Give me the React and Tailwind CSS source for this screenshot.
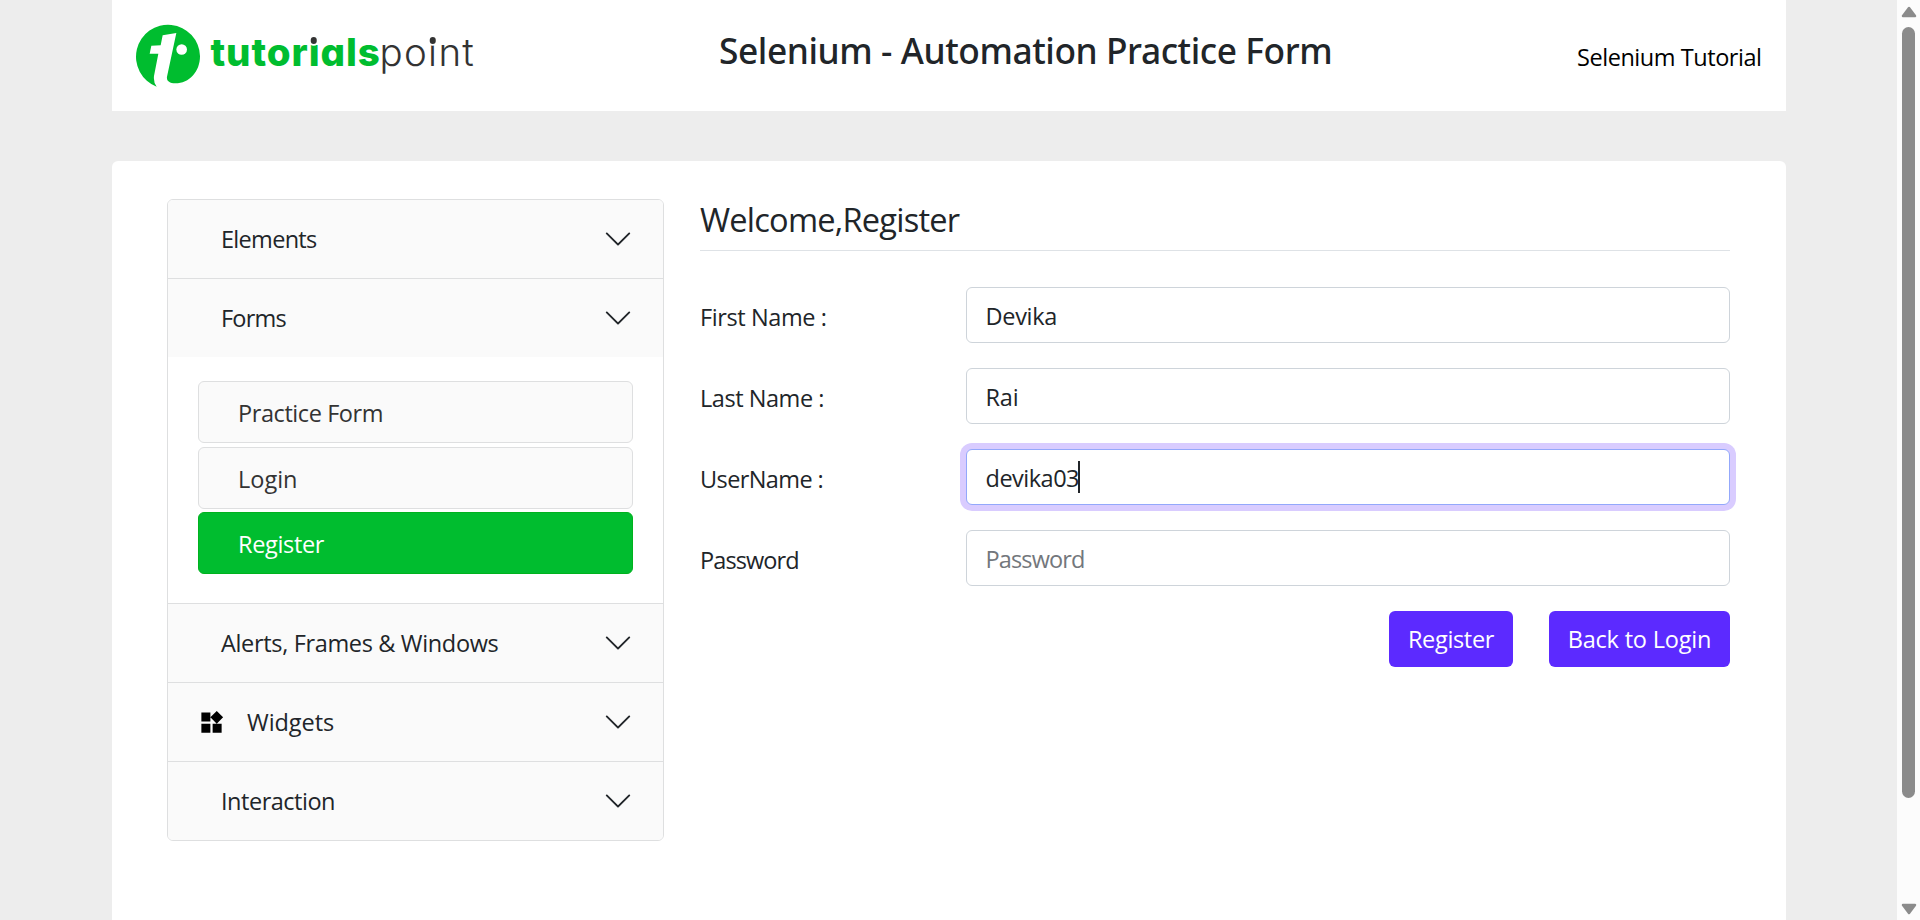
function LogoMark() {
  return (
    <svg viewBox="108 72 192 192" className="size-16 shrink-0">
      <path
        fill="#00bd2f"
        d="M170 260A96 96 0 1 1 300 168C300 215 268 250 226 250C208 250 199 243 201 230L229 99L188 106L182 136L154 137L149 161L175 161L162 228Q160 248 170 260Z"
      />
      <circle cx="245" cy="148.5" r="16" fill="#fff" />
    </svg>
  );
}

function DottedI() {
  return (
    <span className="relative">
      i
      <span className="absolute left-[calc(50%-0.7px)] top-[8px] size-[6.5px] -translate-x-1/2 rounded-full bg-[#333] shadow-[0_0_0_1.8px_#fff]" />
    </span>
  );
}

function Logo() {
  return (
    <div className="flex w-[583px] shrink-0 items-start">
      <LogoMark />
      <div className="mt-1 ml-[10.5px] font-['Inter',sans-serif] text-[38.5px] leading-[48px] whitespace-nowrap">
        <span className="inline-block w-[169px] font-extrabold tracking-[0.9px] text-[#00bd2f] [font-feature-settings:'cv11']">
          tutor<DottedI />als
        </span>
        <span className="font-light tracking-[1.3px] text-[#333]">
          po<DottedI />nt
        </span>
      </div>
    </div>
  );
}

function Chevron() {
  return (
    <svg viewBox="0 0 16 16" className="size-[30px] shrink-0" fill="#212529">
      <path d="M1.646 4.646a.5.5 0 0 1 .708 0L8 10.293l5.646-5.647a.5.5 0 0 1 .708.708l-6 6a.5.5 0 0 1-.708 0l-6-6a.5.5 0 0 1 0-.708z" />
    </svg>
  );
}

function WidgetsIcon() {
  return (
    <svg viewBox="0 0 24 24" className="mr-[22px] ml-[-23px] size-[27px] shrink-0" fill="#000">
      <path d="M13 13v8h8v-8h-8zM3 21h8v-8H3v8zM3 3v8h8V3H3zm13.66-1.31L11 7.34 16.66 13l5.66-5.66-5.66-5.65z" />
    </svg>
  );
}

function Item({ label, tracking, icon, children }) {
  return (
    <div className="border-t border-[#dedfe0] first:border-t-0">
      <button className="flex h-[78px] w-full items-center bg-[#fafafa] pr-[30px] pl-[53px] text-left">
        {icon}
        <span className={`flex-1 leading-9 ${tracking}`}>{label}</span>
        <Chevron />
      </button>
      {children}
    </div>
  );
}

const subItems = [
  { label: "Practice Form", style: "border-[#dedfe0] bg-[#fafafa] text-[#333] tracking-[-0.42px]" },
  { label: "Login", style: "border-[#dedfe0] bg-[#fafafa] text-[#333] tracking-[0px]" },
  { label: "Register", style: "border-[#00b21e] bg-[#00bd2f] text-white tracking-[-0.338px]" },
];

function Sidebar() {
  return (
    <nav className="w-[497px] shrink-0 self-start overflow-hidden rounded-md border border-[#dedfe0]">
      <Item label="Elements" tracking="tracking-[-0.7px]" />
      <Item label="Forms" tracking="tracking-[-0.8px]" />
      <div className="flex h-[246px] flex-col gap-[3.5px] px-[30px] pt-6">
        {subItems.map((s) => (
          <a key={s.label} className={`flex h-[62px] shrink-0 items-center rounded-md border pt-0.5 pl-[39px] leading-9 ${s.style}`}>
            {s.label}
          </a>
        ))}
      </div>
      <Item label="Alerts, Frames & Windows" tracking="tracking-[-0.34px]" />
      <Item label="Widgets" tracking="tracking-[-0.05px]" icon={<WidgetsIcon />} />
      <Item label="Interaction" tracking="tracking-[-0.48px]" />
    </nav>
  );
}

const fields = [
  { label: "First Name :", value: "Devika", l: "tracking-[-0.4px]", v: "tracking-[-0.3px]" },
  { label: "Last Name :", value: "Rai", l: "tracking-[-0.45px]", v: "tracking-[-0.2px]" },
  { label: "UserName :", value: "devika03", l: "tracking-[-0.6px]", v: "tracking-[-0.5px]", focused: true },
  { label: "Password", value: "", l: "tracking-[-0.9px]", v: "tracking-[-0.85px]" },
];

function Field({ label, value, l, v, focused }) {
  return (
    <div className="flex h-14">
      <label className={`w-[266px] shrink-0 pt-[12px] leading-9 ${l}`}>{label}</label>
      <div className="relative flex-1">
        <input
          readOnly
          value={value}
          placeholder={label}
          className={`h-14 w-full rounded-md border bg-white px-[18.5px] pt-0.5 outline-none placeholder:text-[#73777c] ${v} ${focused ? "border-[#93a8fb] shadow-[0_0_0_6px_#d9ccff]" : "border-[#ced4da]"}`}
        />
        {focused && <span className="absolute top-3 left-[112px] h-8 w-0.5 bg-[#212529]" />}
      </div>
    </div>
  );
}

function Scrollbar() {
  return (
    <div className="flex h-full w-[23px] shrink-0 flex-col items-center bg-[#fcfcfc] pt-[6px] pb-[5px]">
      <svg viewBox="0 0 16 12" className="h-3 w-4 shrink-0">
        <path d="M8 2L14 10H2Z" fill="#8b8b8b" stroke="#8b8b8b" strokeWidth="2.5" strokeLinejoin="round" />
      </svg>
      <div className="mt-[9px] h-[771px] w-[13px] shrink-0 rounded-full bg-[#8b8b8b]" />
      <svg viewBox="0 0 16 12" className="mt-auto h-3 w-4 shrink-0">
        <path d="M8 10L14 2H2Z" fill="#8b8b8b" stroke="#8b8b8b" strokeWidth="2.5" strokeLinejoin="round" />
      </svg>
    </div>
  );
}

export default function App() {
  return (
    <div className="flex h-[920px] w-[1920px] overflow-hidden bg-[#ededed] font-['Open_Sans',sans-serif] text-[23.5px] text-[#212529]">
      <div className="flex h-full flex-1 flex-col pr-[111px] pl-28">
        <header className="flex h-[111px] shrink-0 items-start bg-white pt-6 pl-6">
          <Logo />
          <h1 className="mt-[2px] w-[858px] shrink-0 font-['Noto_Sans',sans-serif] text-[35.3px] leading-[48px] font-medium tracking-[-0.42px] whitespace-nowrap">
            Selenium - Automation Practice Form
          </h1>
          <a className="mt-[15px] leading-9 tracking-[-0.45px] whitespace-nowrap text-black">Selenium Tutorial</a>
        </header>
        <main className="mt-[50px] flex flex-1 gap-9 rounded-t-md bg-white pt-[38px] pr-14 pl-[55px]">
          <Sidebar />
          <section className="min-w-0 flex-1">
            <h2 className="h-[52px] border-b border-[#dee2e6] text-[32.6px] leading-[41px] tracking-[-0.78px]">
              Welcome,Register
            </h2>
            <form className="mt-9 flex flex-col gap-[25px]">
              {fields.map((f) => (
                <Field key={f.label} {...f} />
              ))}
              <div className="flex justify-end gap-9 text-white">
                <button type="button" className="h-14 w-[124px] rounded-md bg-[#5c2aff] pt-0.5 tracking-[-0.338px]">
                  Register
                </button>
                <button type="button" className="h-14 w-[181px] rounded-md bg-[#5c2aff] pt-0.5 tracking-[-0.188px]">
                  Back to Login
                </button>
              </div>
            </form>
          </section>
        </main>
      </div>
      <Scrollbar />
    </div>
  );
}
